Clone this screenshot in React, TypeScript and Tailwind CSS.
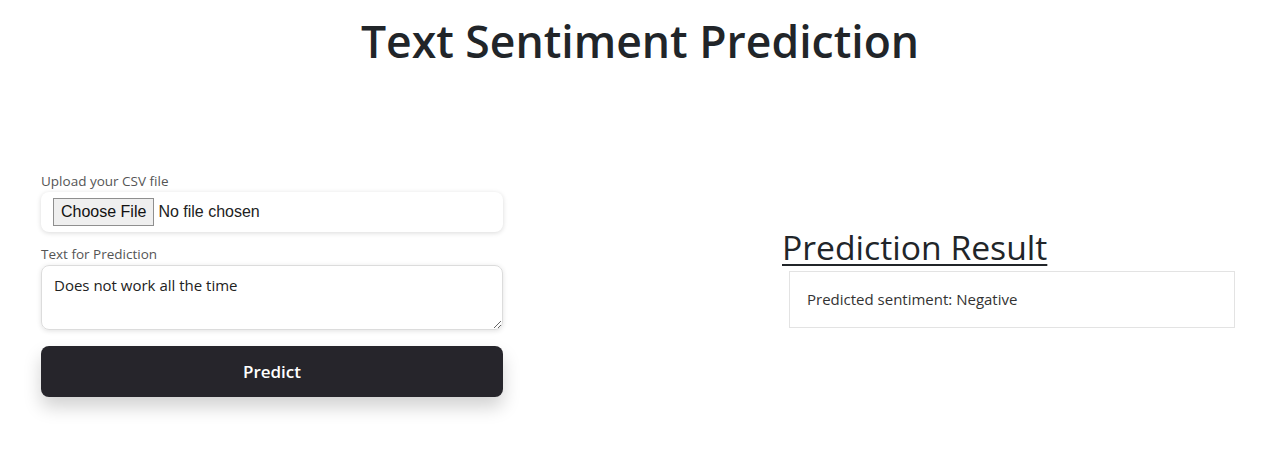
export default function App() {
  return (
    <div className="min-h-[455px] bg-white text-[#212529] font-['Open_Sans',sans-serif]">
      <h1 className="pt-[13px] text-center text-[44.5px] font-semibold leading-[56px] text-[#212529]">
        Text Sentiment Prediction
      </h1>

      <div className="mt-[103px] flex items-center">
        {/* Left: form */}
        <div className="ml-[41px] w-[462px]">
          <label className="block text-[13.5px] leading-[18px] text-[#555]">Upload your CSV file</label>
          <div className="mt-[2px] flex h-[40px] items-center rounded-lg bg-white px-3 shadow-[0_1px_5px_rgba(0,0,0,0.15)]">
            <input type="file" className="text-[16px] font-['Liberation_Sans',sans-serif] text-[#222] file:mr-1 file:border file:border-[#8f8f8f] file:bg-[#efefef] file:px-[7px] file:py-[1px] file:text-[#111] file:font-['Liberation_Sans',sans-serif]" />
          </div>

          <label className="mt-[13px] block text-[13.5px] leading-[18px] text-[#555]">Text for Prediction</label>
          <textarea
            defaultValue="Does not work all the time"
            className="mt-[2px] block h-[65px] w-full rounded-lg border border-[#dcdcdc] px-3 pt-[8px] text-[15px] text-[#222] shadow-[0_1px_5px_rgba(0,0,0,0.12)] outline-none"
          />

          <button className="mt-[16px] h-[51px] w-full rounded-lg bg-[#26252b] text-[17px] font-semibold text-white shadow-[0_10px_18px_rgba(0,0,0,0.18)]">
            Predict
          </button>
        </div>

        {/* Right: result */}
        <div className="ml-[279px] w-[453px] -mt-[15px]">
          <h2 className="text-[33.7px] leading-[40px] text-[#212529] underline decoration-2 underline-offset-[4px]">
            Prediction Result
          </h2>
          <div className="ml-[7px] mt-[4px] flex h-[57px] w-[446px] items-center border border-[#e3e3e3] px-[17px] text-[15px] text-[#333]">
            Predicted sentiment: Negative
          </div>
        </div>
      </div>
    </div>
  );
}
